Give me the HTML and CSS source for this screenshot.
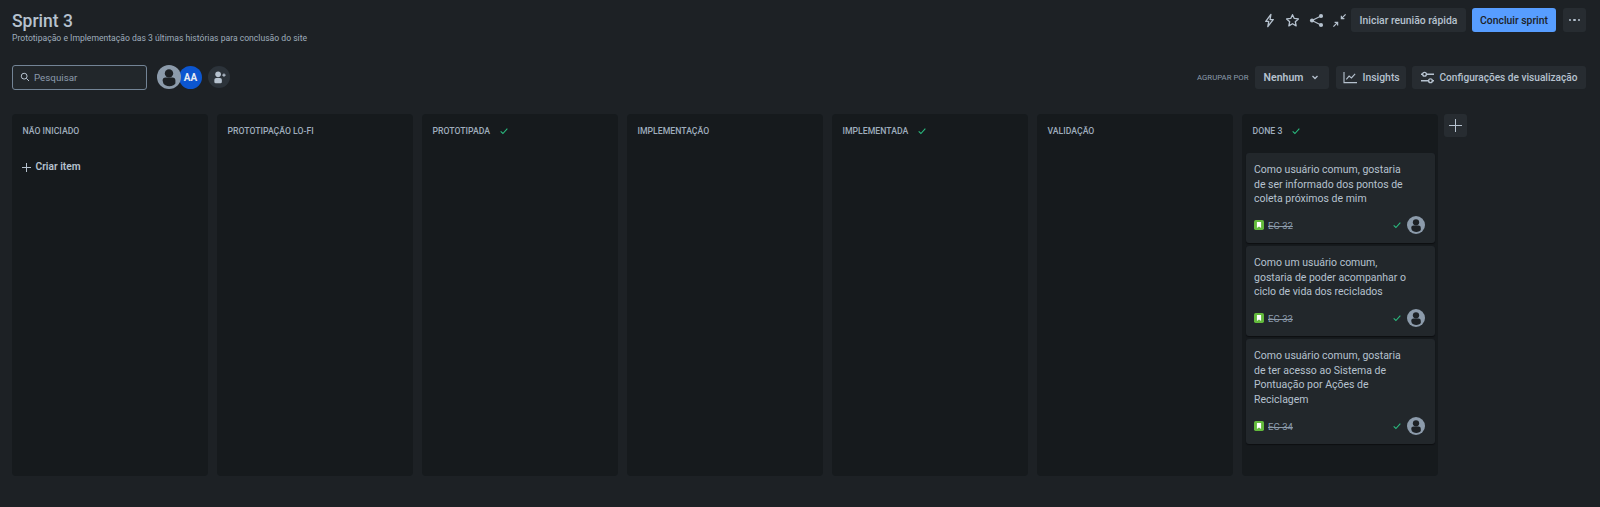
FILE: index.html
```html
<!DOCTYPE html>
<html lang="pt-BR">
<head>
  <meta charset="UTF-8" />
  <title>Sprint 3</title>
  <link rel="stylesheet" href="styles.css">
</head>
<body>
  <svg class="sprite" width="0" height="0">
    <symbol id="person" viewBox="0 0 24 24">
      <circle cx="12" cy="12" r="12" fill="#8c9bab"/>
      <circle cx="12" cy="8.4" r="4.2" fill="#1d2125"/>
      <path d="M5.6 15.6a3 3 0 0 1 3-3h6.800a3 3 0 0 1 3 3v2.900a6 6 0 0 1-2 1.800a8.600 8.600 0 0 1-8 0a6 6 0 0 1-2-1.800z" fill="#1d2125"/>
    </symbol>
    <symbol id="check" viewBox="0 0 12 12">
      <path d="M2 6.500l2.700 2.500L10 3.200" fill="none" stroke="#2abb7f" stroke-width="1.300"/>
    </symbol>
    <symbol id="story" viewBox="0 0 12 12">
      <rect width="12" height="12" rx="2" fill="#63ba3c"/>
      <path d="M3.500 2.500h5v7L6 7.700 3.500 9.500z" fill="#fff"/>
    </symbol>
  </svg>

  <header class="top-row">
    <div>
      <h1>Sprint 3</h1>
      <p class="goal">Prototipação e Implementação das 3 últimas histórias para conclusão do site</p>
    </div>
    <div class="actions">
      <svg class="icon" viewBox="0 0 16 16"><path d="M9.500 1.500L4 9h3.200l-1 5.500L12 7H8.600z" fill="none" stroke="#b6c2cf" stroke-width="1.400" stroke-linejoin="round"/></svg>
      <svg class="icon" viewBox="0 0 16 16"><path d="M8 1.800l1.900 4 4.400.5-3.300 3 .9 4.400L8 11.500l-3.900 2.200.9-4.400-3.300-3 4.400-.5z" fill="none" stroke="#b6c2cf" stroke-width="1.400" stroke-linejoin="round"/></svg>
      <svg class="icon" viewBox="0 0 16 16"><circle cx="3.200" cy="8" r="2.200" fill="#b6c2cf"/><circle cx="12.800" cy="3.200" r="2.200" fill="#b6c2cf"/><circle cx="12.800" cy="12.800" r="2.200" fill="#b6c2cf"/><path d="M12.800 3.200L3.200 8l9.600 4.800" fill="none" stroke="#b6c2cf" stroke-width="1.200"/></svg>
      <svg class="icon icon-last" viewBox="0 0 16 16"><path d="M14.500 1.500L10 6M10 2.800V6h3.200M1.500 14.500L6 10M2.800 10H6v3.200" fill="none" stroke="#b6c2cf" stroke-width="1.300"/></svg>
      <button class="btn btn-meeting">Iniciar reunião rápida</button>
      <button class="btn btn-primary">Concluir sprint</button>
      <button class="btn btn-more" aria-label="Mais"><span></span><span></span><span></span></button>
    </div>
  </header>

  <div class="filter-row">
    <div class="search">
      <svg class="search-icon" viewBox="0 0 12 12"><circle cx="5" cy="5" r="3.500" fill="none" stroke="#b6c2cf" stroke-width="1.200"/><path d="M7.600 7.600L10.800 10.800" stroke="#b6c2cf" stroke-width="1.200"/></svg>
      <span>Pesquisar</span>
    </div>
    <div class="avatars">
      <svg class="avatar-person"><use href="#person"/></svg>
      <span class="avatar-aa">AA</span>
    </div>
    <button class="add-person" aria-label="Adicionar pessoa">
      <svg viewBox="0 0 16 16"><circle cx="6.500" cy="4.600" r="3" fill="#b6c2cf"/><path d="M2.500 10.500a2 2 0 0 1 2-2h4a2 2 0 0 1 2 2v2.200a1.500 1.500 0 0 1-1.500 1.500H4a1.500 1.500 0 0 1-1.500-1.500z" fill="#b6c2cf"/><path d="M11 5.500h3.500M12.750 3.800v3.400" stroke="#b6c2cf" stroke-width="1.200"/></svg>
    </button>
    <div class="view-controls">
      <span class="group-label">AGRUPAR POR</span>
      <button class="btn btn-group">Nenhum
        <svg viewBox="0 0 10 10"><path d="M2.500 4l2.500 2.500L7.500 4" fill="none" stroke="#b6c2cf" stroke-width="1.300"/></svg>
      </button>
      <button class="btn btn-insights">
        <svg viewBox="0 0 16 14"><path d="M1 1v11.500h14" fill="none" stroke="#b6c2cf" stroke-width="1.200"/><path d="M3.500 9l3-3.500 2.500 2 4-4.500" fill="none" stroke="#b6c2cf" stroke-width="1.200"/></svg>
        Insights
      </button>
      <button class="btn btn-settings">
        <svg viewBox="0 0 16 14"><path d="M1 3.500h14M1 10.500h14" stroke="#b6c2cf" stroke-width="1.800"/><circle cx="4.800" cy="3.500" r="2" fill="#1d2125" stroke="#b6c2cf" stroke-width="1.500"/><circle cx="11.200" cy="10.500" r="2" fill="#1d2125" stroke="#b6c2cf" stroke-width="1.500"/></svg>
        Configurações de visualização
      </button>
    </div>
  </div>

  <main class="board">
    <section class="column">
      <h2>NÃO INICIADO</h2>
      <div class="create"><span class="plus"></span>Criar item</div>
    </section>
    <section class="column"><h2>PROTOTIPAÇÃO LO-FI</h2></section>
    <section class="column"><h2>PROTOTIPADA <svg class="col-check"><use href="#check"/></svg></h2></section>
    <section class="column"><h2>IMPLEMENTAÇÃO</h2></section>
    <section class="column"><h2>IMPLEMENTADA <svg class="col-check"><use href="#check"/></svg></h2></section>
    <section class="column"><h2>VALIDAÇÃO</h2></section>
    <section class="column done">
      <h2>DONE 3 <svg class="col-check"><use href="#check"/></svg></h2>
      <article class="card">
        <p>Como usuário comum, gostaria de ser informado dos pontos de coleta próximos de mim</p>
        <div class="card-foot">
          <svg class="story"><use href="#story"/></svg>
          <s>EC-32</s>
          <svg class="card-check"><use href="#check"/></svg>
          <svg class="card-person"><use href="#person"/></svg>
        </div>
      </article>
      <article class="card">
        <p>Como um usuário comum, gostaria de poder acompanhar o ciclo de vida dos reciclados</p>
        <div class="card-foot">
          <svg class="story"><use href="#story"/></svg>
          <s>EC-33</s>
          <svg class="card-check"><use href="#check"/></svg>
          <svg class="card-person"><use href="#person"/></svg>
        </div>
      </article>
      <article class="card">
        <p>Como usuário comum, gostaria de ter acesso ao Sistema de Pontuação por Ações de Reciclagem</p>
        <div class="card-foot">
          <svg class="story"><use href="#story"/></svg>
          <s>EC-34</s>
          <svg class="card-check"><use href="#check"/></svg>
          <svg class="card-person"><use href="#person"/></svg>
        </div>
      </article>
    </section>
    <button class="add-column" aria-label="Adicionar coluna"><span class="plus"></span></button>
  </main>
</body>
</html>
```

FILE: styles.css
```css
* {
  box-sizing: border-box;
}
body {
  margin: 0;
  height: 507px;
  overflow: hidden;
  padding: 8px 14px 0 12px;
  background: #1d2125;
  color: #b6c2cf;
  font-family: Roboto, "Noto Sans", sans-serif;
}
button {
  font-family: inherit;
  border: none;
  cursor: pointer;
}
.sprite {
  position: absolute;
}
.top-row {
  display: flex;
  justify-content: space-between;
  align-items: flex-start;
  height: 56px;
}
h1 {
  margin: 4px 0 0;
  font-size: 17.500px;
  line-height: 18px;
  font-weight: 500;
}
.goal {
  margin: 2px 0 0;
  font-size: 8.600px;
  line-height: 12px;
  color: #9fadbc;
}
.actions {
  display: flex;
  align-items: center;
  height: 24px;
}
.icon {
  width: 15px;
  height: 15px;
  margin-right: 8.500px;
}
.icon-last {
  margin-right: 4px;
}
.btn {
  height: 24px;
  padding: 0 9px;
  border-radius: 3px;
  background: #272c31;
  color: #b6c2cf;
  font-size: 10.400px;
  font-weight: 500;
  white-space: nowrap;
  display: flex;
  align-items: center;
}
.btn-meeting {
  width: 115px;
  justify-content: center;
  padding: 0;
  margin-right: 6px;
}
.btn-primary {
  width: 84px;
  justify-content: center;
  padding: 0;
  margin-right: 7px;
  background: #579dff;
  color: #1d2125;
}
.btn-more {
  width: 23px;
  gap: 2px;
  justify-content: center;
  padding: 0;
}
.btn-more span {
  width: 2.500px;
  height: 2.500px;
  border-radius: 50%;
  background: #b6c2cf;
}
.filter-row {
  display: flex;
  align-items: center;
  height: 26px;
}
.search {
  width: 135px;
  height: 25px;
  border: 1px solid #738496;
  border-radius: 3px;
  background: #22272b;
  display: flex;
  align-items: center;
  gap: 4px;
  padding-left: 7px;
  font-size: 9.800px;
  color: #8c9bab;
}
.search-icon {
  width: 10px;
  height: 10px;
}
.avatars {
  display: flex;
  align-items: center;
  margin-left: 10px;
}
.avatar-person {
  width: 24px;
  height: 24px;
  position: relative;
  z-index: 1;
}
.avatar-aa {
  width: 23px;
  height: 23px;
  margin-left: -2px;
  border-radius: 50%;
  background: #0c56d0;
  color: #e8edf3;
  font-size: 10px;
  font-weight: 700;
  display: flex;
  align-items: center;
  justify-content: center;
}
.add-person {
  width: 22px;
  height: 22px;
  margin-left: 6px;
  padding: 0 0 0 1px;
  border-radius: 50%;
  background: #2c333a;
  display: flex;
  align-items: center;
  justify-content: center;
}
.add-person svg {
  width: 15px;
  height: 15px;
}
.view-controls {
  margin-left: auto;
  display: flex;
  align-items: center;
  gap: 6.500px;
}
.group-label {
  font-size: 7.800px;
  color: #8c9bab;
}
.btn-group {
  width: 74px;
  height: 23px;
  font-size: 10.500px;
  font-weight: 600;
  justify-content: center;
  gap: 7px;
  padding: 0;
}
.btn-group svg {
  width: 10px;
  height: 10px;
}
.btn-insights {
  width: 70px;
  height: 23px;
  gap: 5px;
  padding: 0 0 0 7px;
}
.btn-settings {
  width: 174px;
  height: 23px;
  gap: 5px;
  padding: 0 0 0 7.500px;
  font-size: 10.150px;
}
.btn-insights svg,
.btn-settings svg {
  width: 15px;
  height: 13px;
}
.board {
  display: flex;
  gap: 9px;
  margin-top: 24px;
}
.column {
  flex: 0 0 196px;
  height: 362px;
  border-radius: 4px;
  background: #161a1d;
}
.column h2 {
  margin: 0;
  height: 39px;
  padding: 11px 0 0 10.500px;
  font-size: 8.700px;
  line-height: 12px;
  font-weight: 500;
  color: #9fadbc;
  display: flex;
  align-items: flex-start;
  gap: 9px;
}
.col-check {
  width: 10px;
  height: 12px;
}
.create {
  display: flex;
  align-items: center;
  gap: 4.500px;
  padding: 7px 0 0 10px;
  font-size: 10.200px;
  line-height: 14px;
  font-weight: 600;
}
.plus {
  position: relative;
  display: block;
  width: 9px;
  height: 9px;
}
.plus::before,
.plus::after {
  content: "";
  position: absolute;
  background: #b6c2cf;
}
.plus::before {
  left: 0;
  right: 0;
  top: 4px;
  height: 1px;
}
.plus::after {
  top: 0;
  bottom: 0;
  left: 4px;
  width: 1px;
}
.done {
  padding: 0 3px 0 0;
}
.card {
  margin-left: 4px;
  margin-bottom: 3px;
  padding: 10px 8px 0;
  border-radius: 3px;
  background: #22272b;
  box-shadow: 0 1px 1px #0d0f11;
}
.card p {
  margin: 0;
  max-width: 152px;
  font-size: 10.500px;
  line-height: 14.500px;
}
.card-foot {
  display: flex;
  align-items: center;
  height: 28px;
  margin-top: 4.700px;
  padding-bottom: 4px;
  box-sizing: content-box;
  font-size: 9.500px;
  color: #8c9bab;
}
.story {
  width: 10px;
  height: 10px;
  margin-right: 4px;
}
.card-check {
  width: 10px;
  height: 10px;
  margin-left: auto;
  margin-right: 5px;
}
.card-person {
  width: 18px;
  height: 18px;
  margin-right: 2px;
}
.add-column {
  flex: 0 0 23px;
  height: 23px;
  margin-left: -3px;
  padding: 0;
  border-radius: 3px;
  background: #272c31;
  display: flex;
  align-items: center;
  justify-content: center;
}
.add-column .plus {
  width: 13px;
  height: 13px;
}
.add-column .plus::before {
  top: 6px;
}
.add-column .plus::after {
  left: 6px;
}
```
